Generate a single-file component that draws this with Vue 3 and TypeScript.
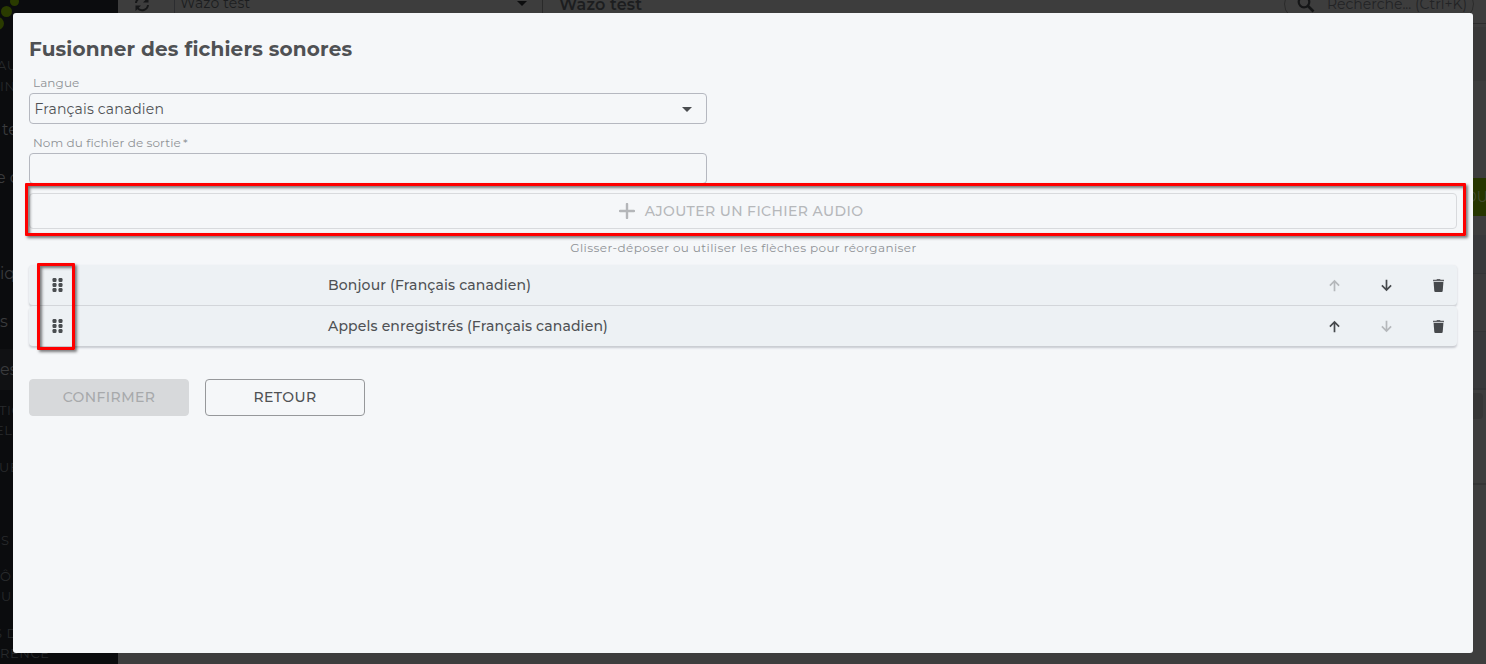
<template>
  <div class="page">
    <aside class="sidebar">
      <div class="brand">
        <span class="dot dot-a"></span>
        <span class="dot dot-b"></span>
        <span class="dot dot-c"></span>
      </div>
      <div class="active-item"></div>
      <nav class="menu">
        <span
          v-for="(item, i) in menu"
          :key="i"
          :class="['menu-item', item.kind]"
          :style="{ marginTop: item.gap + 'px', marginLeft: item.x + 'px' }"
        >{{ item.text }}</span>
      </nav>
    </aside>

    <header class="topbar">
      <div class="refresh">
        <svg width="16" height="16" viewBox="0 0 16 16" fill="none" stroke="#161718" stroke-width="2">
          <path d="M2 7a6 6 0 0 1 10.5-3.2M14 9a6 6 0 0 1-10.5 3.2" />
          <path d="M14.500 1v5.500H9zM1.500 15V9.500H7z" fill="#161718" stroke="none" />
        </svg>
      </div>
      <div class="tenant">
        <span>Wazo test</span>
        <svg width="10" height="5" viewBox="0 0 10 5"><path d="M0 0h10L5 5z" fill="#0c0d0e" /></svg>
      </div>
      <strong class="tenant-name">Wazo test</strong>
      <div class="search">
        <svg width="18" height="18" viewBox="0 0 18 18" fill="none" stroke="#151617" stroke-width="2.200">
          <circle cx="7" cy="7" r="5.300" />
          <path d="M11 11l5.500 5.500" stroke-width="2.600" />
        </svg>
        <span>Recherche... (Ctrl+K)</span>
      </div>
    </header>

    <div class="backdrop-content">
      <div class="strip strip-head"></div>
      <div class="add-button"><span>OU</span></div>
      <div class="strip strip-table"></div>
      <div class="pager"></div>
    </div>

    <section class="modal">
      <h1 class="title">Fusionner des fichiers sonores</h1>

      <label class="label label-lang">Langue</label>
      <div class="field select">
        <span>{{ language }}</span>
        <svg width="10" height="6" viewBox="0 0 10 6"><path d="M0 1h10L5 6z" fill="#4a4d50" /></svg>
      </div>

      <label class="label label-name">Nom du fichier de sortie<i>*</i></label>
      <input v-model="filename" class="field" type="text" />

      <div class="add-wrap">
        <button class="add-file" disabled>
          <svg width="16" height="16" viewBox="0 0 16 16" fill="none" stroke="#b4b6b9" stroke-width="2.400" stroke-linecap="round">
            <path d="M8 1v14M1 8h14" />
          </svg>
          <span>AJOUTER UN FICHIER AUDIO</span>
        </button>
        <div class="highlight highlight-add"></div>
      </div>

      <p class="hint"><span>Glisser-déposer ou utiliser les flèches pour réorganiser</span></p>

      <div class="files">
        <div v-for="(file, index) in files" :key="file.id" class="file-row">
          <svg class="grip" width="12" height="14" viewBox="0 0 12 14" fill="#4a4d50">
            <template v-for="y in [0, 5, 10]" :key="y">
              <rect x="0.500" :y="y" width="4" height="4" rx="1.200" />
              <rect x="6.500" :y="y" width="4" height="4" rx="1.200" />
            </template>
          </svg>
          <span class="file-name">{{ file.name }}</span>
          <button class="icon-btn" :disabled="index === 0" @click="move(index, -1)">
            <svg width="11" height="13" viewBox="0 0 11 13" fill="none" stroke="currentColor" stroke-width="1.700">
              <path d="M5.500 12.200V2M.900 6.600L5.500 2L10.100 6.600" />
            </svg>
          </button>
          <button class="icon-btn" :disabled="index === files.length - 1" @click="move(index, 1)">
            <svg width="11" height="13" viewBox="0 0 11 13" fill="none" stroke="currentColor" stroke-width="1.700">
              <path d="M5.500 .800V11M.900 6.400L5.500 11L10.100 6.400" />
            </svg>
          </button>
          <button class="icon-btn" @click="remove(index)">
            <svg width="11" height="13" viewBox="0 0 11 13" fill="currentColor">
              <path d="M0 .700h3.400L4 0h3l.600.700H11v1.500H0z" opacity=".85" />
              <path d="M.600 3h9.800l-.700 9q-.1 1-1 1H2.300q-.9 0-1-1z" />
            </svg>
          </button>
        </div>
        <div class="highlight highlight-grips"></div>
      </div>

      <div class="actions">
        <button class="btn confirm" disabled><span>CONFIRMER</span></button>
        <button class="btn back"><span>RETOUR</span></button>
      </div>
    </section>
  </div>
</template>

<script setup lang="ts">
import { ref } from 'vue'

interface SoundFile {
  id: string
  name: string
}

const language = ref('Français canadien')
const filename = ref('')
const files = ref<SoundFile[]>([
  { id: 'hello', name: 'Bonjour (Français canadien)' },
  { id: 'calls', name: 'Appels enregistrés (Français canadien)' }
])

// every entry is 20px high, gap is the space above it
const menu = [
  { text: 'AU', kind: 'section', gap: 0, x: -3 },
  { text: 'IN', kind: 'section', gap: 1, x: 0 },
  { text: 'te', kind: 'link', gap: 24, x: 2 },
  { text: 'e c', kind: 'link', gap: 28, x: -4 },
  { text: 'iq', kind: 'link', gap: 76, x: 0 },
  { text: 's', kind: 'link', gap: 28, x: 0 },
  { text: 'es', kind: 'link', gap: 28, x: 0 },
  { text: 'TIO', kind: 'section', gap: 20, x: -1 },
  { text: 'ELL', kind: 'section', gap: 0, x: -5 },
  { text: 'UE', kind: 'section', gap: 17, x: -1 },
  { text: 'S', kind: 'section', gap: 53, x: 1 },
  { text: 'Ô', kind: 'section', gap: 16, x: 0 },
  { text: 'UR', kind: 'section', gap: 0, x: 1 },
  { text: 'S D', kind: 'section', gap: 17, x: -6 },
  { text: 'RENCE', kind: 'section', gap: 0, x: 0 }
]

function move(index: number, step: number) {
  const [file] = files.value.splice(index, 1)
  files.value.splice(index + step, 0, file)
}

function remove(index: number) {
  files.value.splice(index, 1)
}
</script>

<style>
body {
  margin: 0;
  overflow: hidden;
}
</style>

<style scoped>
* {
  box-sizing: border-box;
}

.page {
  position: relative;
  width: 1486px;
  height: 664px;
  overflow: hidden;
  background: #3d3d3d;
  color: #4f5154;
  font-family: Montserrat, Inter, "Liberation Sans", sans-serif;
}

button,
input {
  font-family: inherit;
  padding: 0;
  margin: 0;
}

.sidebar {
  position: absolute;
  left: 0;
  top: 0;
  width: 118px;
  height: 664px;
  overflow: hidden;
  background: #0b0c0e;
}

.dot {
  position: absolute;
  border-radius: 50%;
  background: #2a3b00;
}

.dot-a {
  left: 10px;
  top: -3px;
  width: 9px;
  height: 9px;
}

.dot-b {
  left: 1px;
  top: 6px;
  width: 11px;
  height: 11px;
}

.dot-c {
  left: -9px;
  top: 17px;
  width: 13px;
  height: 13px;
}

.active-item {
  position: absolute;
  top: 349px;
  left: 0;
  width: 118px;
  height: 41px;
  background: #101113;
}

.menu {
  position: relative;
  display: flex;
  flex-direction: column;
  padding-top: 55px;
}

.menu-item {
  flex: none;
  height: 20px;
  line-height: 20px;
  white-space: nowrap;
}

.menu-item.section {
  color: #282a2c;
  font-size: 13px;
  letter-spacing: 0.6px;
}

.menu-item.link {
  color: #3a3b3d;
  font-size: 16px;
}

.topbar {
  display: flex;
  align-items: center;
  height: 40px;
  margin-left: 118px;
  margin-top: -16px;
  padding-right: 12px;
  border-bottom: 1px solid #2c2c2c;
}

.refresh {
  display: flex;
  align-items: center;
  width: 57px;
  height: 40px;
  padding-left: 16px;
  border-right: 1px solid #2c2d30;
}

.tenant {
  display: flex;
  align-items: center;
  justify-content: space-between;
  width: 368px;
  height: 40px;
  padding: 0 15px 1px 5px;
  border-right: 1px solid #2a2a2a;
  color: #1c1d1f;
  font-size: 14px;
  letter-spacing: 0.15px;
}

.tenant-name {
  margin-left: 16px;
  padding-top: 2px;
  color: #1c1d1f;
  font-size: 16px;
  font-weight: 600;
  letter-spacing: 0.15px;
}

.search {
  display: flex;
  align-items: center;
  gap: 12px;
  width: 190px;
  height: 32px;
  margin-left: auto;
  padding-left: 12px;
  border: 1px solid #2b2b2b;
  border-radius: 16px;
  color: #222325;
  font-size: 14px;
  letter-spacing: 0;
  white-space: nowrap;
}

.strip {
  position: absolute;
  right: 0;
  width: 60px;
}

.strip-head {
  top: 27px;
  height: 54px;
  background: #393939;
}

.strip-table {
  top: 235px;
  height: 155px;
  border-bottom: 2px solid #343537;
  background: linear-gradient(#38393b 38px, #333436 38px, #333436 39px, #3b3b3c 39px, #3b3b3c 96px, #333436 96px, #333436 97px, #38393b 97px);
}

.add-button {
  position: absolute;
  top: 178px;
  right: 0;
  width: 30px;
  height: 38px;
  background: #263600;
  color: #424b30;
  font-size: 14px;
  line-height: 38px;
}

.add-button span {
  margin-left: 9px;
}

.pager {
  position: absolute;
  top: 393px;
  right: 3px;
  width: 30px;
  height: 26px;
  border-radius: 4px;
  background: #363636;
}

.backdrop-content::after {
  content: "";
  position: absolute;
  top: 483px;
  right: 0;
  width: 30px;
  height: 2px;
  background: #343434;
}

.modal {
  position: absolute;
  top: 13px;
  left: 13px;
  width: 1460px;
  height: 640px;
  padding: 24px 16px;
  border-radius: 3px;
  background: #f5f7f9;
}

.title {
  margin: 0;
  height: 24px;
  font-size: 20px;
  font-weight: 700;
  line-height: 24px;
  letter-spacing: 0.15px;
  white-space: nowrap;
}

.label {
  display: block;
  height: 16px;
  padding-left: 4px;
  color: #8f9296;
  font-size: 12px;
  line-height: 16px;
  letter-spacing: 0.11px;
}

.label i {
  margin-left: 2px;
  font-style: normal;
}

.label-lang {
  margin-top: 14px;
}

.label-name {
  margin-top: 11px;
}

.field {
  display: flex;
  align-items: center;
  justify-content: space-between;
  width: 678px;
  height: 31px;
  margin-top: 2px;
  padding: 0 14px 0 4.5px;
  border: 1px solid #b5b8c0;
  border-radius: 4px;
  background: transparent;
  color: #4f5154;
  font-size: 14px;
  letter-spacing: 0.15px;
  outline: none;
}

.add-wrap {
  position: relative;
  margin-top: 9px;
}

.add-file {
  display: flex;
  align-items: center;
  justify-content: center;
  gap: 10px;
  width: 100%;
  height: 36px;
  padding-right: 4px;
  border: 1px solid #d8dadd;
  border-radius: 4px;
  background: transparent;
  color: #b6b8bb;
  font-size: 14px;
  font-weight: 500;
  letter-spacing: 0.4px;
}

.highlight {
  position: absolute;
  border: 3px solid #fe0000;
  border-radius: 1px;
  box-shadow: 2px 2px 3px rgba(0, 0, 0, 0.5), inset 2px 2px 3px rgba(0, 0, 0, 0.5);
  pointer-events: none;
}

.highlight-add {
  top: -10px;
  left: -4px;
  width: 1441px;
  height: 53px;
}

.highlight-grips {
  top: -2px;
  left: 8px;
  width: 38px;
  height: 87px;
}

.hint {
  margin: 11px 0 0;
  height: 16px;
  padding-left: 1px;
  color: #8f9296;
  font-size: 12px;
  line-height: 16px;
  letter-spacing: 0.4px;
  text-align: center;
}

.files {
  position: relative;
  margin-top: 9px;
}

.file-row {
  display: grid;
  grid-template-columns: 299px 1fr 52px 52px 38px;
  align-items: center;
  height: 41px;
  border-radius: 4px;
  border-bottom: 1px solid #d3d6da;
  background: #edf1f4;
  box-shadow: 0 1px 2px rgba(60, 64, 80, 0.24);
}

.file-row:nth-child(2) {
  height: 40px;
  border-bottom: none;
  box-shadow: 0 2px 2px rgba(60, 64, 80, 0.24);
}

.grip {
  margin-left: 23px;
}

.file-name {
  font-size: 14px;
  font-weight: 500;
  letter-spacing: 0.15px;
}

.icon-btn {
  display: flex;
  align-items: center;
  justify-content: center;
  width: 39px;
  height: 40px;
  padding-top: 1px;
  border: none;
  background: transparent;
  color: #46494c;
  cursor: pointer;
}

.icon-btn:disabled {
  color: #b5b8bb;
  cursor: default;
}

.actions {
  display: flex;
  gap: 16px;
  margin-top: 33px;
}

.btn {
  width: 160px;
  height: 37px;
  padding-bottom: 1px;
  border: 1px solid #96989b;
  border-radius: 4px;
  background: transparent;
  color: #4f5154;
  font-size: 14px;
  font-weight: 500;
  letter-spacing: 0.4px;
}

.confirm {
  border-color: #d7d9db;
  background: #d7d9db;
  color: #a7a9ab;
}
</style>
